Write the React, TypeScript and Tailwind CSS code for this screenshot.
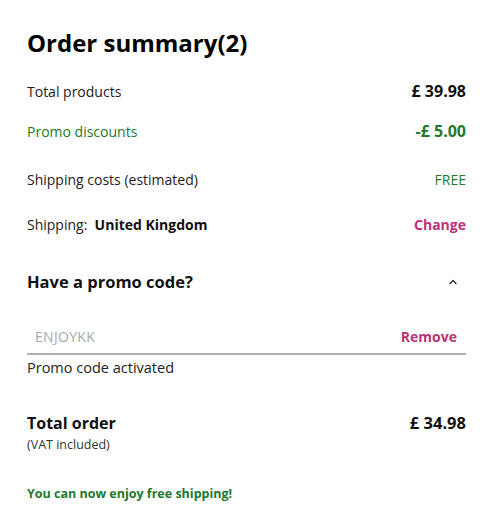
import { ChevronUp } from "lucide-react";

const font = { fontFamily: '"Open Sans", "Liberation Sans", sans-serif' };

function Row({
  label,
  value,
  labelClass = "text-[#222]",
  valueClass = "text-[#111] font-bold",
}: {
  label: React.ReactNode;
  value: React.ReactNode;
  labelClass?: string;
  valueClass?: string;
}) {
  return (
    <div className="flex h-[40px] items-center justify-between text-[14px]">
      <span className={labelClass}>{label}</span>
      <span className={valueClass}>{value}</span>
    </div>
  );
}

export default function App() {
  return (
    <div
      className="h-[512px] w-[486px] bg-white pl-[27px] pr-[20px] pt-[23px] text-[#222]"
      style={font}
    >
      <h1 className="h-[40px] text-[24px] font-bold leading-[40px] text-black">
        Order summary(2)
      </h1>

      <div className="mt-[8px]">
        <Row label="Total products" value="£ 39.98" valueClass="text-[16px] font-bold text-[#111]" />
        <Row
          label="Promo discounts"
          labelClass="text-[#217a2b]"
          value="-£ 5.00"
          valueClass="text-[16px] font-bold text-[#217a2b]"
        />
        <div className="h-[8px]" />
        <Row
          label="Shipping costs (estimated)"
          value="FREE"
          valueClass="text-[14px] text-[#217a2b]"
        />
        <div className="h-[5px]" />
        <Row
          label={
            <>
              Shipping:&nbsp; <span className="font-bold text-[#111]">United Kingdom</span>
            </>
          }
          value="Change"
          valueClass="text-[14px] font-bold text-[#c2307a]"
        />
      </div>

      <div className="mt-[18px] flex h-[40px] items-center justify-between">
        <span className="text-[16.5px] font-bold text-[#111]">Have a promo code?</span>
        <ChevronUp className="mr-[7px] h-[12px] w-[12px] text-[#222]" strokeWidth={2.5} />
      </div>

      <div className="mt-[21px] flex h-[32px] items-center justify-between border-b-2 border-[#b0b0b0] pb-[4px] pl-[8px] pr-[9px]">
        <span className="text-[14px] tracking-[0.3px] text-[#a8a8a8]">ENJOYKK</span>
        <span className="text-[14px] font-bold text-[#b83476]">Remove</span>
      </div>
      <p className="mt-[2px] text-[14.5px] text-[#222]">Promo code activated</p>

      <div className="mt-[33px] flex items-start justify-between">
        <div>
          <p className="text-[16px] font-bold leading-[22px] text-[#111]">Total order</p>
          <p className="mt-[2px] text-[12.5px] text-[#333]">(VAT included)</p>
        </div>
        <span className="text-[16.5px] font-bold leading-[22px] text-[#111]">£ 34.98</span>
      </div>

      <p className="mt-[30px] text-[12.5px] font-bold text-[#217a2b]">
        You can now enjoy free shipping!
      </p>
    </div>
  );
}
